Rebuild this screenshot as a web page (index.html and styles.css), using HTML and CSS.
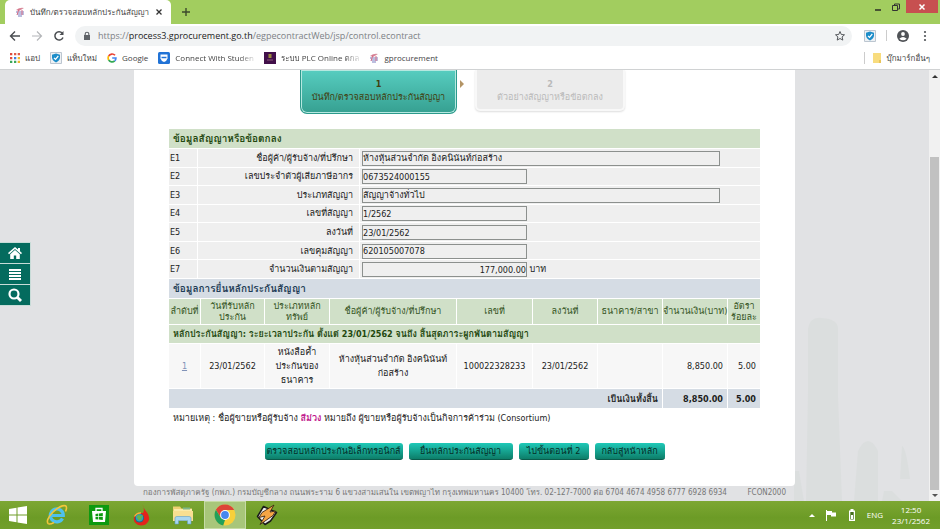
FILE: index.html
```html
<!DOCTYPE html>
<html lang="th">
<head>
<meta charset="utf-8">
<title>บันทึก/ตรวจสอบหลักประกันสัญญา</title>
<link rel="stylesheet" href="styles.css">
</head>
<body>
<header class="browser">
  <div class="tabstrip">
    <div class="tab">
      <svg class="ico10" viewBox="0 0 10 10"><path d="M1 3Q5 0 9 1L4 4Z" fill="#d9899b"/><path d="M1 5h8M2 7h7M3 9h4" stroke="#7a7fc0" stroke-width="1.2"/><path d="M4 2L2 8M7 3v5" stroke="#d66d86"/></svg>
      <span class="tab-title">บันทึก/ตรวจสอบหลักประกันสัญญา</span>
      <button class="icon-btn" aria-label="ปิดแท็บ"><svg class="ico8" viewBox="0 0 8 8"><path d="M1.5 1.5l5 5M6.500 1.500l-5 5" stroke="#333" stroke-width="1.300"/></svg></button>
    </div>
    <button class="icon-btn new-tab" aria-label="แท็บใหม่"><svg class="ico10" viewBox="0 0 10 10"><path d="M5 1v8M1 5h8" stroke="#3c4a2c" stroke-width="1.400"/></svg></button>
    <div class="window-controls">
      <button class="win" aria-label="ย่อ"><svg class="ico8" viewBox="0 0 8 8"><path d="M1 7h6" stroke="#222" stroke-width="1.400"/></svg></button>
      <button class="win" aria-label="คืนค่า"><svg class="ico8" viewBox="0 0 8 8" fill="none" stroke="#333"><path d="M2.500 2V1h5v5H6"/><path d="M.5 2.500h5v5h-5z"/></svg></button>
      <button class="win win-close" aria-label="ปิด"><svg class="ico8" viewBox="0 0 8 8"><path d="M1.500 1.500l5 5M6.500 1.500l-5 5" stroke="#fff" stroke-width="1.500"/></svg></button>
    </div>
  </div>
  <div class="toolbar">
    <button class="icon-btn" aria-label="ย้อนกลับ"><svg class="ico12" viewBox="0 0 12 12" fill="none" stroke="#4a4d51" stroke-width="1.400"><path d="M11 6H2M6 1.500L1.500 6 6 10.500"/></svg></button>
    <button class="icon-btn" aria-label="ไปข้างหน้า"><svg class="ico12" viewBox="0 0 12 12" fill="none" stroke="#b4b6b9" stroke-width="1.200"><path d="M1 6h9M6 1.500L10.500 6 6 10.500"/></svg></button>
    <button class="icon-btn" aria-label="โหลดใหม่"><svg class="ico12" viewBox="0 0 12 12" fill="none" stroke="#4a4d51" stroke-width="1.500"><path d="M10 7.500A4.200 4.200 0 1 1 9.200 3"/><path d="M10.500 1v4h-4z" fill="#4a4d51" stroke="none"/></svg></button>
    <div class="omnibox">
      <svg class="ico10" viewBox="0 0 10 10"><path d="M2 4h6v5H2z" fill="#5f6368"/><path d="M3.200 4.500V3a1.800 1.800 0 0 1 3.600 0v1.500" fill="none" stroke="#5f6368" stroke-width="1.100"/></svg>
      <span class="url"><span>https://</span><b>process3.gprocurement.go.th</b><span>/egpecontractWeb/jsp/control.econtract</span></span>
      <svg class="ico12" viewBox="0 0 12 12" fill="none" stroke="#55585c"><path d="M6 1.500l1.300 3 3.200.3-2.400 2.100.7 3.200L6 8.500 3.200 10.100l.7-3.200L1.500 4.800l3.200-.3z"/></svg>
    </div>
    <svg class="ico12" viewBox="0 0 12 12"><path d="M.5.5h11v11H.5z" fill="#eef1f4" stroke="#bcc6d0"/><path d="M6 1.500l4 1.300v3Q9.500 9 6 10.500 2.500 9 2 5.800v-3z" fill="#1c8dc9"/><path d="M4 5.800l1.500 1.500L8.300 4" fill="none" stroke="#fff" stroke-width="1.200"/></svg>
    <span class="vsep"></span>
    <svg class="ico12" viewBox="0 0 12 12"><circle cx="6" cy="6" r="6" fill="#505357"/><circle cx="6" cy="4" r="1.900" fill="#fff"/><path d="M2.300 8.700Q6 5.500 9.700 8.700 6 12 2.300 8.700z" fill="#fff"/></svg>
    <button class="icon-btn" aria-label="เมนู"><svg class="ico12" viewBox="0 0 12 12" fill="#505357"><circle cx="6" cy="2" r="1.100"/><circle cx="6" cy="6" r="1.100"/><circle cx="6" cy="10" r="1.100"/></svg></button>
  </div>
  <nav class="bookmarks">
    <a href="#"><svg class="ico10" viewBox="0 0 10 10"><path d="M0 0h2.300v2.300H0zM0 4h2.300v2.300H0z" fill="#e04a3c"/><path d="M4 0h2.300v2.300H4zM7.700 0H10v2.300H7.700z" fill="#df5a48"/><path d="M4 4h2.300v2.300H4z" fill="#3f7de0"/><path d="M0 7.700h2.300V10H0zM4 7.700h2.300V10H4z" fill="#3ba757"/><path d="M7.700 4H10v2.300H7.700zM7.700 7.700H10V10H7.700z" fill="#efb72c"/></svg>แอป</a>
    <a href="#"><svg class="ico12" viewBox="0 0 12 12"><path d="M.5.5h11v11H.5z" fill="#eef1f4" stroke="#bcc6d0"/><path d="M6 1.500l4 1.300v3Q9.500 9 6 10.500 2.500 9 2 5.800v-3z" fill="#1c8dc9"/><path d="M4 5.800l1.500 1.500L8.300 4" fill="none" stroke="#fff" stroke-width="1.200"/></svg>แท็บใหม่</a>
    <a href="#"><svg class="ico10" viewBox="0 0 10 10" fill="none" stroke-width="1.700"><path d="M8 2.300A3.900 3.900 0 0 0 1.700 3" stroke="#e94235"/><path d="M1.700 3a4 4 0 0 0 0 4" stroke="#fbbc05"/><path d="M1.700 7A3.900 3.900 0 0 0 7.700 7.900" stroke="#34a853"/><path d="M7.700 7.900A4 4 0 0 0 8.900 5H5.200" stroke="#4285f4"/></svg>Google</a>
    <a href="#"><svg class="ico12" viewBox="0 0 12 12"><rect width="12" height="12" rx="1.500" fill="#2173d6"/><path d="M2.500 2.500h7v4Q8.500 9.500 6 10 3.500 9.500 2.500 6.500z" fill="#fff"/><path d="M3.500 5.500h5" stroke="#2173d6" stroke-width="1.500"/></svg><span class="clip">Connect With Studen</span></a>
    <a href="#"><svg class="ico12" viewBox="0 0 12 12"><path d="M0 0h12v12H0z" fill="#42104a"/><path d="M4.500 2h3v4h-3z" fill="#9a8a3c"/><path d="M3 8h6" stroke="#8b5a78"/></svg><span class="clip">ระบบ PLC Online ตกล</span></a>
    <a href="#"><svg class="ico10" viewBox="0 0 10 10"><path d="M1 3Q5 0 9 1L4 4Z" fill="#d9899b"/><path d="M1 5h8M2 7h7M3 9h4" stroke="#7a7fc0" stroke-width="1.200"/><path d="M4 2L2 8M7 3v5" stroke="#d66d86"/></svg>gprocurement</a>
    <a href="#" class="other"><svg class="ico10" viewBox="0 0 10 10"><path d="M1 0h8v10H1z" fill="#f8dc7e"/><path d="M7 7h2v3H7z" fill="#e9c45a"/></svg>บุ๊กมาร์กอื่นๆ</a>
  </nav>
</header>

<div class="viewport">
  <svg class="skyline" viewBox="0 0 145 190" preserveAspectRatio="none"><g fill="#dbdede"><path d="M22 190L24 80V18Q26 5 38 7 54 8 54 18V85L58 190z"/><path d="M70 190L74 140Q84 120 94 140V190z"/><path d="M116 168L118 135Q122 136 126 168z"/><path d="M10 160h5l5 30H10z"/><path d="M100 180l8 0 10 10H98z"/></g></svg>
  <nav class="side">
    <a href="#" aria-label="หน้าหลัก"><svg class="ico14" viewBox="0 0 14 14" fill="#fff"><path d="M7 1L0 7l1 1.200L7 3l6 5.200L14 7l-2-1.800V2h-2v1.500z"/><path d="M7 4L2.200 8.200V13h3.600V9.500h2.400V13h3.600V8.200z"/></svg></a>
    <a href="#" aria-label="เมนู"><svg class="ico14" viewBox="0 0 14 14" fill="#fff"><path d="M1 2h12v2H1zM1 5h12v2H1zM1 8h12v2H1zM1 11h12v2H1z"/></svg></a>
    <a href="#" aria-label="ค้นหา"><svg class="ico14" viewBox="0 0 14 14" fill="none" stroke="#fff"><circle cx="6" cy="6" r="4.500" stroke-width="2.200"/><path d="M9.500 9.500L13 13" stroke-width="2.800"/></svg></a>
  </nav>
  <div class="page">
    <main class="card">
      <div class="steps">
        <div class="step step-on"><b>1</b><span>บันทึก/ตรวจสอบหลักประกันสัญญา</span></div>
        <svg class="arrow" viewBox="0 0 4 8"><path d="M0 0l4 4-4 4z" fill="#b39465"/></svg>
        <div class="step step-off"><b>2</b><span>ตัวอย่างสัญญาหรือข้อตกลง</span></div>
      </div>
      <form>
        <table class="info">
          <colgroup><col class="k1"><col class="k2"><col></colgroup>
          <thead><tr><th colspan="3">ข้อมูลสัญญาหรือข้อตกลง</th></tr></thead>
          <tbody>
            <tr><td class="code">E1</td><td class="label"><label for="e1">ชื่อผู้ค้า/ผู้รับจ้าง/ที่ปรึกษา</label></td><td><input id="e1" class="wide" value="ห้างหุ้นส่วนจำกัด อิงคนินันท์ก่อสร้าง" readonly></td></tr>
            <tr><td class="code">E2</td><td class="label"><label for="e2">เลขประจำตัวผู้เสียภาษีอากร</label></td><td><input id="e2" value="0673524000155" readonly></td></tr>
            <tr><td class="code">E3</td><td class="label"><label for="e3">ประเภทสัญญา</label></td><td><input id="e3" class="wide" value="สัญญาจ้างทั่วไป" readonly></td></tr>
            <tr><td class="code">E4</td><td class="label"><label for="e4">เลขที่สัญญา</label></td><td><input id="e4" value="1/2562" readonly></td></tr>
            <tr><td class="code">E5</td><td class="label"><label for="e5">ลงวันที่</label></td><td><input id="e5" value="23/01/2562" readonly></td></tr>
            <tr><td class="code">E6</td><td class="label"><label for="e6">เลขคุมสัญญา</label></td><td><input id="e6" value="620105007078" readonly></td></tr>
            <tr><td class="code">E7</td><td class="label"><label for="e7">จำนวนเงินตามสัญญา</label></td><td><input id="e7" class="amount" value="177,000.00" readonly> บาท</td></tr>
          </tbody>
        </table>
        <table class="bonds">
          <caption>ข้อมูลการยื่นหลักประกันสัญญา</caption>
          <colgroup><col class="c1"><col class="c2"><col class="c3"><col class="c4"><col class="c5"><col class="c6"><col class="c7"><col class="c8"><col class="c9"></colgroup>
          <thead><tr><th>ลำดับที่</th><th>วันที่รับหลัก<br>ประกัน</th><th>ประเภทหลัก<br>ทรัพย์</th><th>ชื่อผู้ค้า/ผู้รับจ้าง/ที่ปรึกษา</th><th>เลขที่</th><th>ลงวันที่</th><th>ธนาคาร/สาขา</th><th>จำนวนเงิน(บาท)</th><th>อัตรา<br>ร้อยละ</th></tr></thead>
          <tbody>
            <tr class="group"><td colspan="9">หลักประกันสัญญา: ระยะเวลาประกัน ตั้งแต่ 23/01/2562 จนถึง สิ้นสุดภาระผูกพันตามสัญญา</td></tr>
            <tr class="item"><td><a href="#">1</a></td><td>23/01/2562</td><td>หนังสือค้ำ<br>ประกันของ<br>ธนาคาร</td><td>ห้างหุ้นส่วนจำกัด อิงคนินันท์<br>ก่อสร้าง</td><td>100022328233</td><td>23/01/2562</td><td></td><td class="num">8,850.00</td><td class="num">5.00</td></tr>
          </tbody>
          <tfoot><tr><td colspan="7">เป็นเงินทั้งสิ้น</td><td>8,850.00</td><td>5.00</td></tr></tfoot>
        </table>
        <p class="note">หมายเหตุ : ชื่อผู้ขายหรือผู้รับจ้าง <strong>สีม่วง</strong> หมายถึง ผู้ขายหรือผู้รับจ้างเป็นกิจการค้าร่วม (Consortium)</p>
        <div class="actions">
          <button type="button" class="b1">ตรวจสอบหลักประกันอิเล็กทรอนิกส์</button>
          <button type="button" class="b2">ยื่นหลักประกันสัญญา</button>
          <button type="button" class="b3">ไปขั้นตอนที่ 2</button>
          <button type="button" class="b3">กลับสู่หน้าหลัก</button>
        </div>
      </form>
    </main>
    <footer class="foot"><span>กองการพัสดุภาครัฐ (กพภ.) กรมบัญชีกลาง ถนนพระราม 6 แขวงสามเสนใน เขตพญาไท กรุงเทพมหานคร 10400 โทร. 02-127-7000 ต่อ 6704 4674 4958 6777 6928 6934</span><span>FCON2000</span></footer>
  </div>
  <div class="scroll"><span class="up"></span><span class="thumb"></span><span class="down"></span></div>
</div>

<footer class="taskbar">
  <button class="task" aria-label="Start"><svg class="ico20" viewBox="0 0 20 20" fill="#fff"><path d="M1 4l7.500-1.200v6.700H1zM9.500 2.600L19 1v8.500H9.500zM1 10.500h7.500v6.700L1 16zM9.500 10.500H19V19l-9.500-1.600z"/></svg></button>
  <button class="task" aria-label="Internet Explorer"><svg class="ico22" viewBox="0 0 22 22" fill="none"><path d="M16.500 14.500A6.500 6.500 0 1 1 17.300 11.500H6" stroke="#4fc1ee" stroke-width="3.200"/><path d="M2.500 20Q-1 17 6.500 8.500 15 .5 19.500 1.800 21.500 3 19.500 7.500" stroke="#f3c63a" stroke-width="1.600"/><path d="M2.500 20q2 .5 5.500-1.500" stroke="#f3c63a" stroke-width="1.500"/></svg></button>
  <button class="task" aria-label="Store"><svg class="ico20" viewBox="0 0 20 20"><path d="M0 0h20v20H0z" fill="#0d9a10"/><path d="M3 6h14l-1 11H4z" fill="#fff"/><path d="M7 6V3.500h6V6" fill="none" stroke="#fff" stroke-width="1.300"/><path d="M6.500 9l2.800-.4v2.600H6.500zM10 8.500l3.800-.5v3.200H10zM6.500 12h2.800v2.600l-2.800-.4zM10 12h3.800v3.100L10 14.600z" fill="#0d9a10"/></svg></button>
  <button class="task" aria-label="Browser"><svg class="ico22" viewBox="0 0 22 22"><path d="M12.500 0Q13 4 17 8.500 22 15.500 15.500 20.500 9 23.500 4.500 18 2.500 13 6 10q2-1.500 7-1Q15 6 12.500 0z" fill="#e3241c"/><circle cx="9.500" cy="14" r="4.500" fill="#1d6a80"/><circle cx="9.500" cy="13.700" r="3.700" fill="#2b9fc0"/><path d="M6.500 13l2.500-3 1 2 3-1-2 5-2 .5z" fill="#62b54c"/><path d="M4.500 12.500Q7 8.500 11 9" fill="none" stroke="#f4b13c" stroke-width="1.400"/></svg></button>
  <button class="task" aria-label="Explorer"><svg class="ico22" viewBox="0 0 22 22"><path d="M1 2.500h7l1.500 2H20V17H1z" fill="#edcf73"/><path d="M2 5h18v12H2z" fill="#fbeaa8"/><path d="M11 3.500h7v2h-7z" fill="#7eb78b"/><path d="M1 7h20v10H1z" fill="#f8df91"/><path d="M3 20v-6q0-1.500 2-1.500h12q2 0 2 1.500v6h-3.500v-3.500h-9V20z" fill="#a8d6f0" stroke="#5ea0c8" stroke-width=".6"/></svg></button>
  <button class="task task-on" aria-label="Chrome"><svg class="ico22" viewBox="0 0 22 22"><circle cx="11" cy="11" r="10.500" fill="#f7d03b"/><path d="M11 .5A10.500 10.500 0 0 1 20.200 6H11L6.400 13 1.900 5.800A10.500 10.500 0 0 1 11 .5z" fill="#dc4437"/><path d="M1.900 5.800L6.700 13.500 11 16l-1.800 5.400A10.500 10.500 0 0 1 1.900 5.800z" fill="#22a05a"/><circle cx="11" cy="11" r="4.900" fill="#fff"/><circle cx="11" cy="11" r="3.900" fill="#4687ee"/></svg></button>
  <button class="task" aria-label="Winamp"><svg class="ico22" viewBox="0 0 22 22"><path d="M7.500 2.500L20.500 8.500 14.500 17 9 20.500 1.500 12.500z" fill="#eee" stroke="#1a1a1a" stroke-width="1.500" stroke-linejoin="round"/><path d="M18 1L6 8.500l-3 5 6-1.500L4 20.500 17 11.500l2.500-4.500-5.500 1z" fill="#f5a545" stroke="#3d2815" stroke-width=".9" stroke-linejoin="round"/></svg></button>
  <div class="tray">
    <svg class="ico8" viewBox="0 0 8 8"><path d="M1 6l3-3 3 3z" fill="#fff"/></svg>
    <svg class="ico12" viewBox="0 0 12 12"><path d="M1.500 1v11" stroke="#fff"/><path d="M2 2h5v1.500h4v4H6V6H2z" fill="#fff"/></svg>
    <svg class="ico12" viewBox="0 0 12 12"><path d="M4.500 0h3v1.500H9V12H3V1.500h1.500z" fill="#fff"/><path d="M4.300 3h3.400v7.500H4.300z" fill="#46701d"/><path d="M5 6h2v4H5z" fill="#fff"/></svg>
    <span>ENG</span>
    <time class="clock">12:50<br>23/1/2562</time>
  </div>
</footer>
</body>
</html>
```
FILE: styles.css
```css
* { box-sizing: border-box; }
body {
  margin: 0;
  height: 100vh;
  display: flex;
  flex-direction: column;
  overflow: hidden;
  font: 9px/14px "DejaVu Sans Condensed", "Loma", "Noto Sans Thai Looped", "Noto Sans Thai", "Noto Sans", sans-serif;
  color: #1c1c1c;
}
svg { display: block; flex: none; }
button, input { font: inherit; color: inherit; }
a { color: inherit; text-decoration: none; }
.ico8 { width: 8px; height: 8px; }
.ico10 { width: 10px; height: 10px; }
.ico12 { width: 12px; height: 12px; }
.ico14 { width: 14px; height: 14px; }
.ico20 { width: 20px; height: 20px; }
.ico22 { width: 22px; height: 22px; }

/* browser frame */
.browser { flex: none; background: #fff; border-bottom: 1px solid #d0d2d3; font-family: "Open Sans", "Loma", "Noto Sans Thai", sans-serif; font-size: 8px; }
.tabstrip { display: flex; height: 24px; background: #a2cd5f; align-items: flex-start; }
.tab {
  display: flex; align-items: center; gap: 5px;
  width: 166px; height: 24px; margin-left: 5px; padding: 0 8px 0 10px;
  background: #fff; border-radius: 5px 5px 0 0; white-space: nowrap;
}
.tab-title { flex: 1; color: #444; }
.icon-btn { border: 0; background: none; padding: 0; display: flex; }
.new-tab { margin: 7px 0 0 10px; }
.window-controls { margin-left: auto; display: flex; padding-right: 2px; }
.win { border: 0; background: none; padding: 0 5px; height: 13px; display: flex; align-items: center; }
.win-close { background: #c75050; padding: 0 12px; margin-left: 1px; }
.toolbar { display: flex; align-items: center; gap: 10px; height: 23px; padding: 0 9px; }
.omnibox { flex: 1; display: flex; align-items: center; gap: 6px; height: 20px; margin-right: 2px; padding: 0 6px 0 7px; border-radius: 10px; background: #f1f3f4; }
.url { flex: 1; font-size: 9px; color: #7d8185; white-space: nowrap; }
.url b { font-weight: 400; color: #222; }
.vsep { width: 1px; height: 11px; background: #ccc; }
.bookmarks { display: flex; align-items: center; height: 22px; padding: 0 10px; gap: 10px; color: #444; }
.bookmarks a { display: flex; align-items: center; gap: 5px; white-space: nowrap; }
.clip { mask-image: linear-gradient(90deg, #000 80%, rgba(0, 0, 0, .2)); }
.bookmarks .other { margin-left: auto; border-left: 1px solid #ccc; padding-left: 7px; line-height: 12px; }

/* page area */
.viewport { flex: 1; min-height: 0; display: flex; position: relative; background: #e1e2e4; }
.skyline { position: absolute; right: 11px; bottom: 0; width: 145px; height: 190px; }
.side { position: absolute; left: 0; top: 172px; width: 31px; display: flex; flex-direction: column; gap: 1px; background: #c8dcd8; border: solid #c8dcd8; border-width: 1px 1px 1px 0; }
.side a { display: flex; justify-content: center; align-items: center; height: 20px; background: #046b5e; }
.page { flex: 1; min-width: 0; position: relative; display: flex; flex-direction: column; padding: 0 134px; }
.card { background: #fff; border-radius: 0 0 4px 4px; padding: 0 35px; flex: 1; }
.steps { display: flex; justify-content: center; align-items: flex-start; height: 58px; gap: 3px; padding-right: 4px; }
.step { display: flex; flex-direction: column; align-items: center; padding-top: 8px; line-height: 13px; white-space: nowrap; }
.step-on { width: 157px; height: 44px; background: linear-gradient(#57cdc0, #36a091); color: #42400f; border: 1px solid #2c9a8c; border-top: 0; border-radius: 0 0 7px 7px; box-shadow: inset 0 0 0 1px #b6e8e0; }
.step-off { width: 150px; height: 41px; margin-left: 8px; background: #ececec; color: #bababa; border: 2px solid #f8f8f8; border-top: 0; border-radius: 0 0 5px 5px; box-shadow: 0 1px 2px #ddd; }
.arrow { width: 4px; height: 8px; margin-top: 10px; }

table { table-layout: fixed; width: calc(100% + 2px); margin: 0 -1px; border-spacing: 1px; }
.info { height: 151px; }
.info th { height: 19px; padding: 0 4px; text-align: left; font-size: 10px; background: #d0e0c8; color: #23480f; }
.info td { padding: 0 1px; background: #efefef; line-height: 16px; white-space: nowrap; }
.k1 { width: 28px; }
.k2 { width: 161px; }
.info td.label { text-align: right; padding-right: 6px; }
.info input { display: inline-block; vertical-align: middle; width: 165px; height: 15px; margin-left: 1px; padding: 0; border: 1px solid #8c908e; background: #efefef; }
.info input.wide { width: 358px; }
.info input.amount { text-align: right; }

.bonds { text-align: center; }
.bonds caption { height: 19px; line-height: 19px; margin: 0 1px; padding: 0 4px; text-align: left; font-size: 10px; font-weight: 700; background: #d5dce4; color: #1f3c56; }
.bonds th, .bonds td { padding: 0; background: #f7f7f7; white-space: nowrap; }
.bonds th { height: 25px; background: #d0e0c8; color: #35551f; font-weight: 400; line-height: 11px; }
.bonds .group td { height: 18px; padding: 0 4px; text-align: left; font-weight: 700; background: #d0e0c8; color: #23480f; }
.bonds .item td { height: 44px; }
.bonds .item a { color: #8193b8; text-decoration: underline; }
.bonds td.num, .bonds tfoot td { text-align: right; padding-right: 4px; }
.bonds tfoot td { height: 19px; font-weight: 700; background: #d5dce4; }
.c1 { width: 31px; }
.c2 { width: 63px; }
.c3 { width: 64px; }
.c5 { width: 75px; }
.c6 { width: 64px; }
.c7 { width: 64px; }
.c8 { width: 64px; }
.c9 { width: 32px; }
.note { margin: 2px 4px 0; white-space: nowrap; }
.note strong { color: #c0168c; }
.actions { display: flex; justify-content: center; gap: 6px; margin-top: 18px; }
.actions button { height: 17px; padding: 0; border: 0; border-bottom: 1px solid #0a5c4c; border-radius: 3px; background: linear-gradient(#1fc9b8, #0d7e69); color: #062f27; white-space: nowrap; }
.b1 { width: 138px; }
.b2 { width: 104px; }
.b3 { width: 70px; }
.foot { flex: none; height: 15px; display: flex; justify-content: space-between; padding: 0 9px; font-size: 8px; color: #777; white-space: nowrap; }
.scroll { position: relative; width: 11px; background: #f1f1f1; display: flex; flex-direction: column; align-items: center; }
.up, .down { width: 0; height: 0; border: 3px solid transparent; }
.up { border-bottom-color: #333; margin: 2px 0; }
.down { border-top-color: #555; margin: 4px 0 1px; }
.thumb { flex: 1; width: 9px; margin-top: 77px; background: #c1c1c1; }

/* taskbar */
.taskbar { flex: none; display: flex; height: 28px; background: linear-gradient(#7da733, #6c9b26 60%, #729f2b); color: #fff; }
.task { width: 42px; border: 0; padding: 0; background: none; display: flex; align-items: center; justify-content: center; }
.task:first-child { width: 36px; }
.task-on { background: #a8c67a; border: 1px solid #c6dba6; }
.tray { margin-left: auto; display: flex; align-items: center; gap: 9px; padding-right: 10px; font-family: "Open Sans", sans-serif; font-size: 8px; }
.clock { text-align: center; line-height: 11px; }
```
